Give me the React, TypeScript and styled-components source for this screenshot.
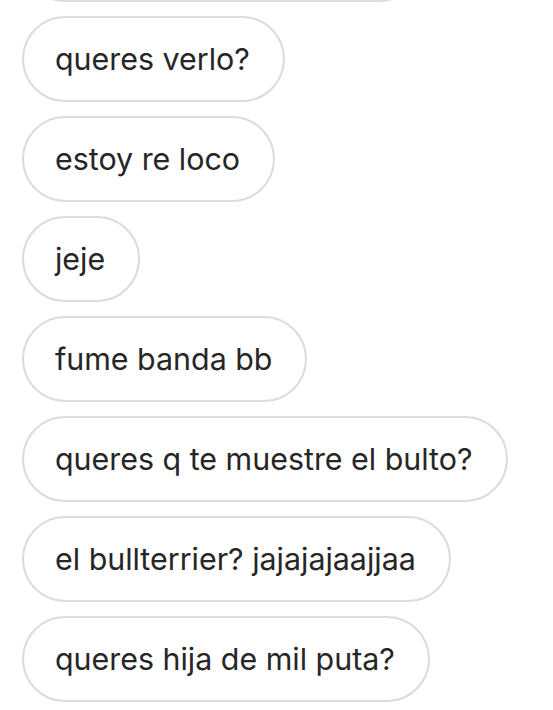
import { createGlobalStyle, styled } from "styled-components";

const messages = [
  "queres verlo?",
  "estoy re loco",
  "jeje",
  "fume banda bb",
  "queres q te muestre el bulto?",
  "el bullterrier? jajajajaajjaa",
  "queres hija de mil puta?",
];

const App = () => {
  return (
    <>
      <GlobalStyle />
      <Thread>
        <Bubble $clipped>&nbsp;</Bubble>
        {messages.map((text, i) => (
          <Bubble key={i}>{text}</Bubble>
        ))}
      </Thread>
    </>
  );
};

const GlobalStyle = createGlobalStyle`
  html, body {
    margin: 0;
    padding: 0;
    background: #ffffff;
  }
  body {
    width: 553px;
    height: 710px;
    overflow: hidden;
  }
`;

const Thread = styled.div`
  display: flex;
  flex-direction: column;
  align-items: flex-start;
  gap: 14px;
  padding: 0 22px;
  margin-top: -84px;
  font-family: Inter, Roboto, "Liberation Sans", sans-serif;
`;

const Bubble = styled.div<{ $clipped?: boolean }>`
  box-sizing: border-box;
  display: flex;
  align-items: center;
  height: 86px;
  padding: 0 33px 0 31px;
  border: 2px solid #dbdbdb;
  border-radius: 43px;
  background: #ffffff;
  color: #262626;
  font-size: 30.4px;
  white-space: nowrap;
  width: ${(p) => (p.$clipped ? "400px" : "auto")};
`;

export default App;
